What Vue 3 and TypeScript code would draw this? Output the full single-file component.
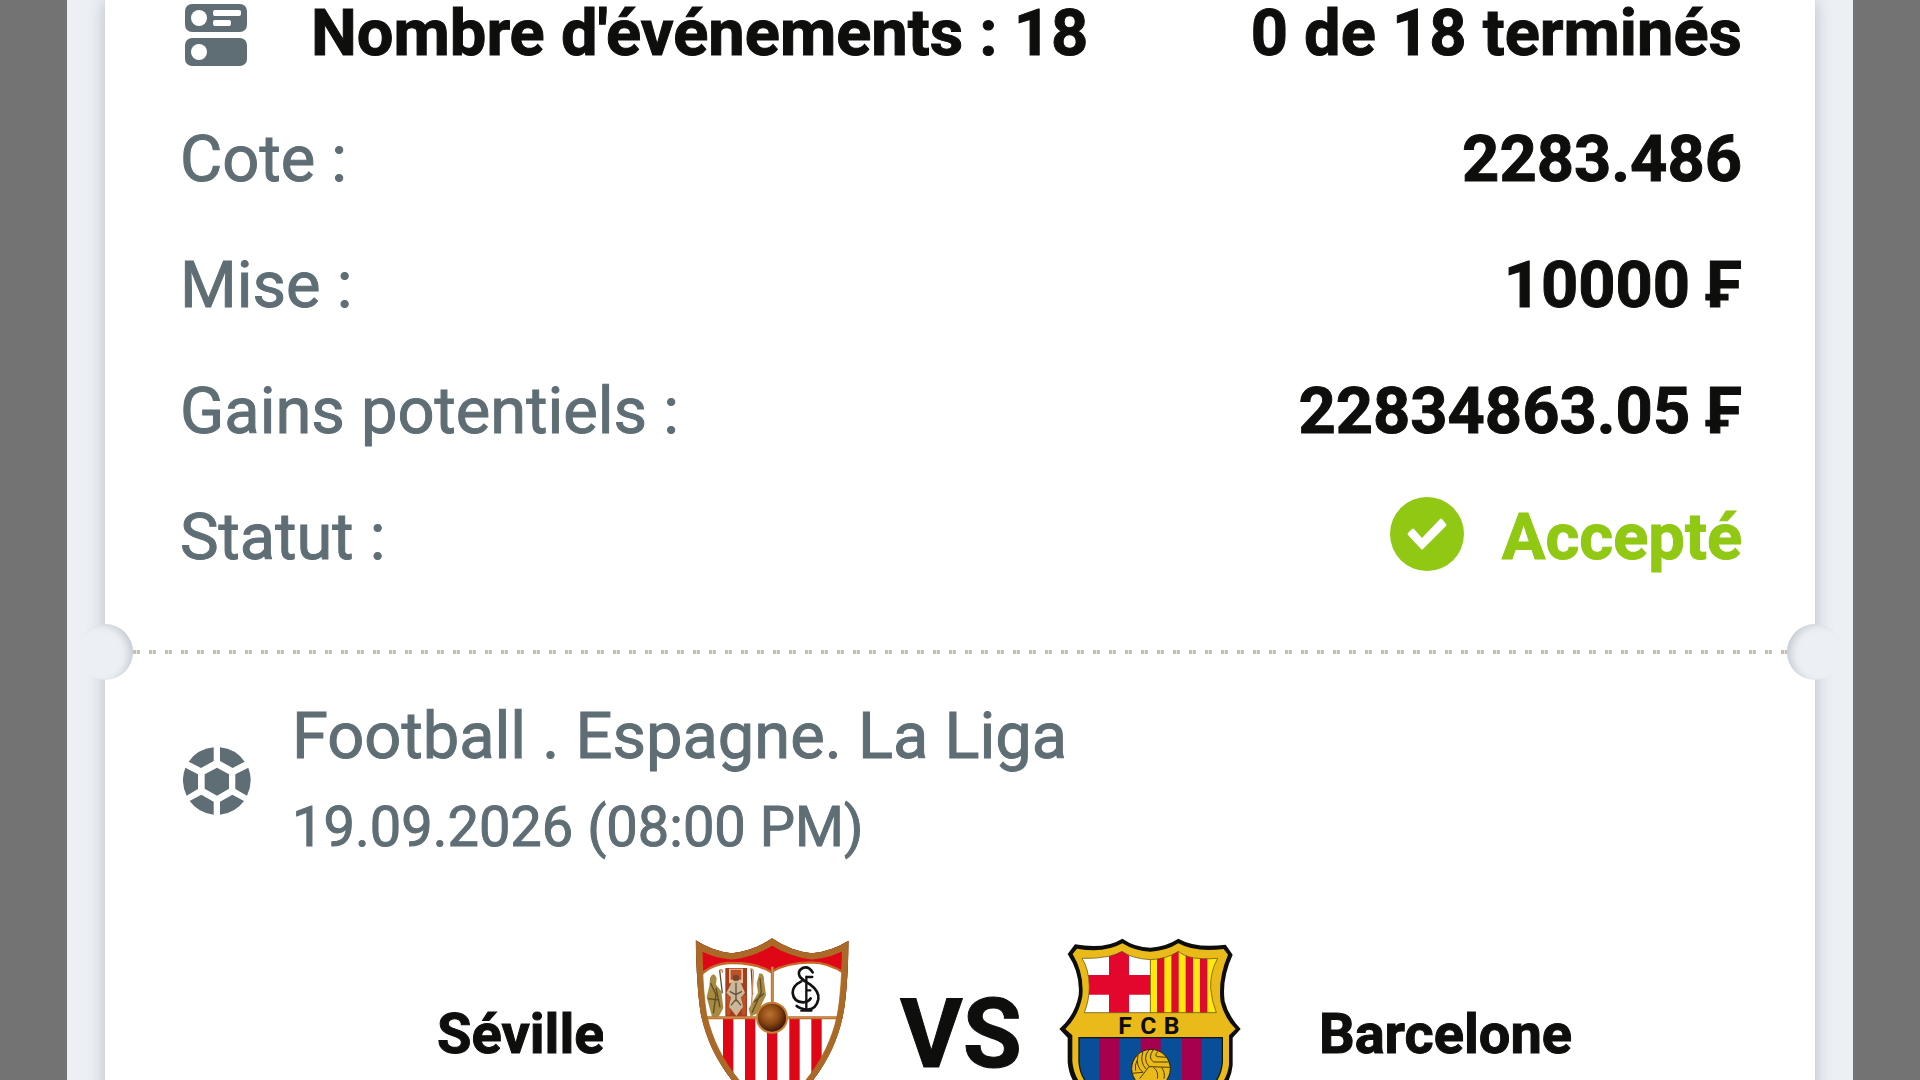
<script setup lang="ts">
interface SummaryRow {
  label: string
  value: string
  accepted?: boolean
}

const rows: SummaryRow[] = [
  { label: 'Cote :', value: '2283.486' },
  { label: 'Mise :', value: '10000 ₣' },
  { label: 'Gains potentiels :', value: '22834863.05 ₣' },
  { label: 'Statut :', value: 'Accepté', accepted: true },
]

const sevillaStripes: number[] = [131, 197, 263, 330, 396]
const barcaStripes: number[] = [178, 302, 426]
const senyeraStripes: number[] = [351, 394, 437, 480]
</script>

<template>
  <div class="screen">
    <div class="panel">
      <main class="ticket">
        <header class="ticket-head">
          <svg class="events-icon" viewBox="0 0 62 62" aria-hidden="true">
            <rect width="62" height="28" rx="7" />
            <rect y="34" width="62" height="28" rx="7" />
            <g class="cut">
              <circle cx="14" cy="14" r="8" />
              <circle cx="14" cy="48" r="8" />
              <rect x="28" y="6" width="28" height="6" rx="2" />
              <rect x="28" y="16" width="18" height="6" rx="2" />
            </g>
          </svg>
          <h1 class="title">Nombre d'événements : 18</h1>
          <span class="progress">0 de 18 terminés</span>
        </header>

        <dl class="summary">
          <div v-for="row in rows" :key="row.label" class="summary-row">
            <dt>{{ row.label }}</dt>
            <dd :class="{ accepted: row.accepted }">
              <svg v-if="row.accepted" class="check" viewBox="0 0 74 80" aria-hidden="true">
                <circle cx="37" cy="37" r="37" />
                <path class="cut" d="M18 36l4-4q1-1 2 0l8 9 18-19q1-1 2 0l4 5q1 1 0 2L33 52q-1 1-2 0L18 38q-1-1 0-2z" />
              </svg>
              <span>{{ row.value }}</span>
            </dd>
          </div>
        </dl>

        <div class="tear">
          <span class="notch notch-left"></span>
          <span class="perforation"></span>
          <span class="notch notch-right"></span>
        </div>

        <section class="event">
          <header class="event-head">
            <svg class="ball-icon" viewBox="69 52 204 204" aria-hidden="true">
              <path d="M171 114l36 20v43l-36 21-37-21v-43z" />
              <path d="M161 53v41l-38 21-37-19q26-38 75-43z" />
              <path d="M180 53v41l38 21 36-19q-26-38-74-43z" />
              <path d="M76 114l38 20v44l-34 20q-20-42-4-84z" />
              <path d="M265 114l-39 20v44l35 20q20-42 4-84z" />
              <path d="M89 214l35-19 37 21v39q-46-5-72-41z" />
              <path d="M252 214l-35-19-37 21v39q46-5 72-41z" />
            </svg>
            <div>
              <h2 class="league">Football . Espagne. La Liga</h2>
              <p class="date">19.09.2026 (08:00 PM)</p>
            </div>
          </header>

          <div class="match">
            <span class="team team-home">Séville</span>

            <svg class="crest" viewBox="6 54 544 552" role="img" aria-label="Séville">
              <defs>
                <clipPath id="sevilla-shield">
                  <path d="M49 61Q100 94 157 100 225 92 278 55 335 94 398 100 455 94 508 62 505 210 492 280 470 400 385 500 330 560 278 596 225 560 170 495 88 400 64 280 52 200 49 61z" />
                </clipPath>
                <radialGradient id="sevilla-ball" cx=".42" cy=".38" r=".62">
                  <stop offset="0" stop-color="#bb7331" />
                  <stop offset=".55" stop-color="#8b4813" />
                  <stop offset="1" stop-color="#3f1a05" />
                </radialGradient>
              </defs>
              <g clip-path="url(#sevilla-shield)">
                <path fill="#df0716" d="M40 50h480v560H40z" />
                <path fill="#fff" stroke="#c46a27" stroke-width="7" d="M60 170Q95 130 155 129 230 128 275 156 320 128 395 127 450 128 495 160V296H60z" />
                <path fill="#fff" d="M50 296h460v320H50z" />
                <rect v-for="x in sevillaStripes" :key="x" :x="x" y="296" width="31" height="310" fill="#df0716" />
                <g>
                  <path fill="#a83c1c" d="M138 144h65v146h-65z" />
                  <path fill="#e6c099" d="M149 146h42v44h-42z" />
                  <path fill="#bb5129" d="M154 149h32v30h-32zM142 224h11v62h-11zM188 224h11v62h-11z" />
                  <circle cx="170" cy="174" r="10" fill="#77452a" />
                  <path fill="#c9b999" d="M158 186q12-7 25 0l14 32-12 14 6 28-20 28-22-28 6-28-14-14z" />
                  <path fill="none" stroke="#66513a" stroke-width="4" d="M170 188v56M151 214l18 10 19-10M155 256l15-18 15 18" />
                  <path fill="#a68a42" d="M92 174q10-22 20 0l-2 20 16 20 6 50-14 26H98L82 232l8-34z" />
                  <path fill="none" stroke="#614c25" stroke-width="4" d="M94 190l16 34-8 56M110 204l12 58M121 150l8 70M86 236l34 4" />
                  <path fill="#a68a42" d="M240 160q16 0 14 22l6 44-26 54-20 10-6-24 28-48-4-28z" />
                  <path fill="none" stroke="#614c25" stroke-width="4" d="M242 174l4 42-28 62M216 150l4 74M224 246l30-26" />
                  <path fill="none" stroke="#c88a55" stroke-width="4" d="M121 151q10-6 8 8M212 148q10-4 10 10l-6 112" />
                </g>
                <path fill="none" stroke="#b8702b" stroke-width="9" d="M279 140v112M64 293h166M326 293h170" />
                <path fill="none" stroke="#e3a266" stroke-width="2" d="M279 140v112M64 293h166M326 293h170" />
                <path fill="none" stroke="#573310" stroke-width="34" d="M49 61Q100 94 157 100 225 92 278 55 335 94 398 100 455 94 508 62 505 210 492 280 470 400 385 500 330 560 278 596 225 560 170 495 88 400 64 280 52 200 49 61z" />
                <path fill="none" stroke="#b8732b" stroke-width="29" d="M55 70Q100 99 157 104 225 96 278 60 335 97 398 104 455 99 503 70 500 210 488 280 466 400 381 500 330 555 278 590 225 555 174 495 92 400 68 280 56 200 55 70z" stroke-opacity=".85" />
              </g>
              <circle cx="278" cy="293" r="48" fill="#c87d37" />
              <circle cx="278" cy="293" r="42" fill="url(#sevilla-ball)" />
              <g fill="none" stroke="#111" stroke-linecap="round">
                <path stroke-width="8" d="M400 157Q388 137 370 144 352 154 362 171 372 182 392 193 421 214 417 238 411 267 386 269 363 267 352 258" />
                <path stroke-width="8" d="M366 184Q339 197 340 219 343 246 371 247 388 246 394 235" />
                <path stroke-width="7" d="M381 170v101M381 171h18M381 211h12M366 272h30" />
              </g>
            </svg>

            <span class="versus">VS</span>

            <svg class="crest" viewBox="58 58 544 552" role="img" aria-label="Barcelone">
              <defs>
                <clipPath id="barca-top">
                  <path d="M126 119Q165 121 207 113 229 108 246 98 275 120 331 123 382 121 415 98 439 119 486 120 510 121 533 119 510 160 512 210 516 250 529 282H133Q147 248 148 205 147 150 126 119z" />
                </clipPath>
                <clipPath id="barca-bottom">
                  <path d="M117 357H547V430Q542 500 470 535 390 560 332 590 270 560 195 535 122 500 117 430z" />
                </clipPath>
              </defs>
              <path fill="#0d0d0b" d="M83 106L105 77Q195 93 247 60 285 86 331 87 378 84 415 60 468 90 557 78L578 108Q545 180 554 248 565 292 602 331L578 357V440Q570 520 490 550 400 575 331 610 260 575 175 550 90 515 83 430V357L58 331Q105 290 116 230 122 165 83 106z" />
              <path fill="#eab91a" d="M98 106L111 90Q193 105 247 74 286 98 331 99 378 97 415 74 465 102 551 91L564 108Q533 180 542 251 553 298 587 331L567 350V438Q558 510 483 538 395 563 331 595 265 563 181 538 103 504 97 428V350L76 331Q116 292 127 233 133 165 98 106z" />
              <g clip-path="url(#barca-top)">
                <path fill="#fff" d="M110 90h221v200H110z" />
                <path fill="#e3072e" d="M207 90h60v200h-60zM110 169h221v59H110z" />
                <path fill="#ffe80c" d="M331 90h210v200H331z" />
                <rect v-for="x in senyeraStripes" :key="x" :x="x" y="90" width="22" height="200" fill="#dd0b2c" />
                <path stroke="#40350d" stroke-width="2" d="M331 120v170" />
              </g>
              <path fill="none" stroke="#51450c" stroke-width="2" d="M126 119Q165 121 207 113 229 108 246 98 275 120 331 123 382 121 415 98 439 119 486 120 510 121 533 119 510 160 512 210 516 250 529 282H133Q147 248 148 205 147 150 126 119z" />
              <g clip-path="url(#barca-bottom)">
                <path fill="#084e99" d="M110 350h450v250H110z" />
                <rect v-for="x in barcaStripes" :key="x" :x="x" y="357" width="60" height="240" fill="#a6004e" />
              </g>
              <path fill="none" stroke="#171710" stroke-width="4" d="M547 357V430Q542 500 470 535 390 560 332 590 270 560 195 535 122 500 117 430V357z" />
              <text class="crest-text" x="235 301 371" y="347">FCB</text>
              <circle cx="333" cy="450" r="58" fill="#eab91a" stroke="#27210d" stroke-width="3" />
              <path fill="none" stroke="#4b3b0b" stroke-width="3" d="M327 393Q306 419 327 444L389 446M294 409Q286 444 309 461L276 464M309 399Q298 430 319 452M327 444L299 480M340 393Q322 418 341 430L387 430M354 398Q342 412 352 414L379 416M341 446Q357 460 352 480M365 447Q376 460 372 480M292 424Q283 438 287 456" />
            </svg>

            <span class="team">Barcelone</span>
          </div>
        </section>
      </main>
    </div>
  </div>
</template>

<style>
body {
  margin: 0;
  background: #737373;
}
</style>

<style scoped>
.screen {
  height: 100vh;
  overflow: hidden;
  padding: 0 67px;
  background: #737373;
  font-family: Roboto, "Noto Sans", sans-serif;
  font-size: 65px;
  color: #0e0e0d;
  -webkit-text-stroke: 1px currentColor;
}

.panel {
  min-height: 100%;
  padding: 0 38px;
  background: #ecf0f5;
}

.ticket {
  min-height: 100vh;
  background: #fff;
  box-shadow: 0 0 16px #b4bac4;
}

.ticket-head {
  display: flex;
  align-items: center;
  padding: 0 73px 30px 80px;
  line-height: 66px;
  font-weight: 700;
  white-space: nowrap;
}

.events-icon {
  width: 62px;
  height: 62px;
  margin: 4px 64px 0 0;
  fill: #5f6e75;
}

.events-icon .cut,
.check .cut {
  fill: #fff;
}

.title {
  margin: 0;
  font-size: inherit;
  font-weight: 700;
}

.progress {
  margin-left: auto;
}

.summary {
  margin: 0;
  padding: 0 73px 0 75px;
}

.summary-row {
  display: flex;
  justify-content: space-between;
  line-height: 126px;
  white-space: nowrap;
}

.summary-row dt {
  color: #5f6e75;
}

.summary-row dd {
  display: flex;
  align-items: center;
  gap: 38px;
  margin: 0;
  font-weight: 700;
}

.summary-row .accepted {
  color: #90c814;
}

.check {
  width: 74px;
  height: 80px;
  fill: #90c814;
}

.tear {
  display: flex;
  align-items: center;
  justify-content: space-between;
  margin: 24px -28px 0;
}

.notch {
  width: 56px;
  height: 56px;
  border-radius: 50%;
  background: #ecf0f5;
}

.notch-left {
  box-shadow: inset -6px 2px 8px -3px #c0c6cc;
}

.notch-right {
  box-shadow: inset 6px 2px 8px -3px #c0c6cc;
}

.perforation {
  flex: 1;
  height: 4px;
  background: repeating-linear-gradient(90deg, #c3c1ae 0 3px, #ecebe3 3px 4px, #c3c1ae 4px 7px, #fff 7px 16px);
}

.event-head {
  display: flex;
  align-items: center;
  gap: 41px;
  padding: 10px 78px 0;
  color: #5f6e75;
}

.ball-icon {
  width: 68px;
  height: 68px;
  fill: #5f6e75;
}

.league {
  margin: 0;
  font-size: inherit;
  font-weight: 400;
  line-height: 92px;
}

.date {
  margin: 0;
  font-size: 56px;
  line-height: 90px;
}

.match {
  display: grid;
  grid-template-columns: 1fr 182px auto 182px 1fr;
  align-items: center;
  height: 192px;
  margin-top: 66px;
  padding-left: 2px;
}

.team {
  margin: 0 78px;
  font-size: 56px;
  font-weight: 700;
  line-height: 72px;
}

.team-home {
  justify-self: end;
  width: 166px;
  overflow: hidden;
}

.crest {
  align-self: start;
  width: 182px;
  height: 184px;
}

.crest-text {
  font-family: Roboto, sans-serif;
  font-size: 74px;
  font-weight: 700;
  fill: #0d0d0b;
}

.versus {
  margin: 0 37px;
  font-size: 96px;
  font-weight: 700;
  line-height: 112px;
}
</style>
